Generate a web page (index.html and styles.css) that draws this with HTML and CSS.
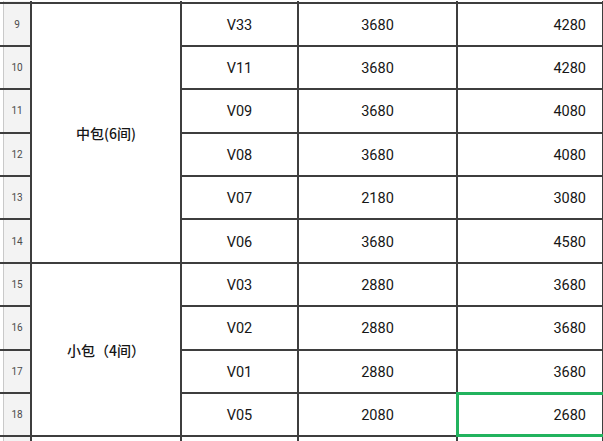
FILE: index.html
```html
<!DOCTYPE html>
<html lang="zh">
<head>
<meta charset="utf-8">
<link rel="stylesheet" href="styles.css">
</head>
<body>
<div class="sheet">
  <div class="hd"></div><div class="c"></div><div class="c"></div><div class="c"></div><div class="c"></div>

  <div class="hd">9</div>
  <div class="c grp g1">中包(6间)</div>
  <div class="c ctr">V33</div><div class="c ctr">3680</div><div class="c num">4280</div>

  <div class="hd">10</div>
  <div class="c ctr">V11</div><div class="c ctr">3680</div><div class="c num">4280</div>

  <div class="hd">11</div>
  <div class="c ctr">V09</div><div class="c ctr">3680</div><div class="c num">4080</div>

  <div class="hd">12</div>
  <div class="c ctr">V08</div><div class="c ctr">3680</div><div class="c num">4080</div>

  <div class="hd">13</div>
  <div class="c ctr">V07</div><div class="c ctr">2180</div><div class="c num">3080</div>

  <div class="hd">14</div>
  <div class="c ctr">V06</div><div class="c ctr">3680</div><div class="c num">4580</div>

  <div class="hd">15</div>
  <div class="c grp g2">小包（4间）</div>
  <div class="c ctr">V03</div><div class="c ctr">2880</div><div class="c num">3680</div>

  <div class="hd">16</div>
  <div class="c ctr">V02</div><div class="c ctr">2880</div><div class="c num">3680</div>

  <div class="hd">17</div>
  <div class="c ctr">V01</div><div class="c ctr">2880</div><div class="c num">3680</div>

  <div class="hd">18</div>
  <div class="c ctr">V05</div><div class="c ctr">2080</div><div class="c num sel">2680</div>

  <div class="hd"></div><div class="c"></div><div class="c"></div><div class="c"></div><div class="c"></div>
</div>
</body>
</html>
```

FILE: styles.css
```css
html, body {
  margin: 0;
  padding: 0;
  background: #ffffff;
  overflow: hidden;
}

.sheet {
  display: grid;
  grid-template-columns: 30px 148px 115px 157px 144px;
  grid-template-rows: 0.5px repeat(10, 41.4px) 12px;
  gap: 2px;
  background: #3e3e3e;
  padding-right: 1px;
  width: max-content;
  margin-top: 1px;
  font-family: Roboto, "Noto Sans CJK SC", sans-serif;
  font-size: 14.5px;
  font-weight: 400;
  color: #161616;
}

.hd {
  background: #f3f3f3;
  border-left: 3px solid #ffffff;
  box-shadow: inset 1px 0 0 #c9c9c9;
  color: #4a4a4a;
  font-size: 10px;
  display: flex;
  align-items: center;
  justify-content: center;
  padding-left: 1px;
}

.c {
  background: #ffffff;
  display: flex;
  align-items: center;
}

.ctr {
  justify-content: center;
  padding-top: 2px;
}

.num {
  justify-content: flex-end;
  padding-right: 16px;
  padding-top: 2px;
}

.grp {
  justify-content: center;
  font-family: "Noto Sans CJK SC", sans-serif;
  font-weight: 500;
  font-size: 14px;
}

.g1 {
  grid-column: 2;
  grid-row: 2 / span 6;
}

.g2 {
  grid-column: 2;
  grid-row: 8 / span 4;
}

.sel {
  position: relative;
}

.sel::after {
  content: "";
  position: absolute;
  left: -2px;
  top: -2px;
  right: -4px;
  bottom: -2px;
  border: 3px solid #22b35e;
}
```
